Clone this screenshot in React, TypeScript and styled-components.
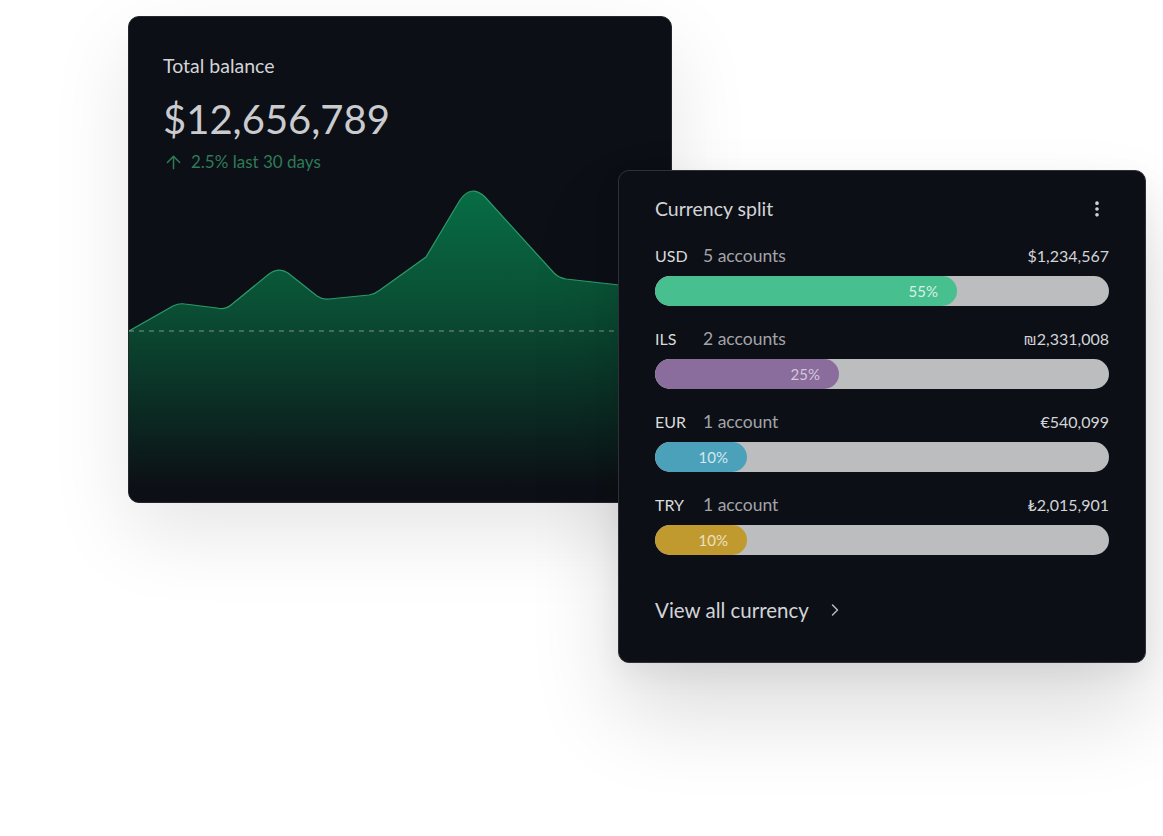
import React from 'react';
import styled, { createGlobalStyle } from 'styled-components';
import { ArrowUp, EllipsisVertical, ChevronRight } from 'lucide-react';

const GlobalStyle = createGlobalStyle`
  html, body {
    margin: 0;
    padding: 0;
    background: #ffffff;
  }
  body {
    font-family: Lato, 'Noto Sans', sans-serif;
  }
`;

const Page = styled.div`
  width: 1163px;
  height: 836px;
  padding: 16px 0 0 128px;
  box-sizing: border-box;
`;

const Stage = styled.div`
  position: relative;
  width: 1018px;
`;

const BalanceCard = styled.div`
  width: 544px;
  height: 487px;
  box-sizing: border-box;
  background: #0c0f16;
  border: 1px solid #23262d;
  border-radius: 11px;
  overflow: hidden;
  display: flex;
  flex-direction: column;
  box-shadow: 0 30px 80px rgba(0, 0, 0, 0.1);
`;

const BalanceHead = styled.div`
  padding: 37px 34px 0;
  display: flex;
  flex-direction: column;
`;

const CardTitle = styled.div`
  font-size: 19.5px;
  line-height: 24px;
  color: #d3d4d6;
`;

const BigAmount = styled.div`
  margin-top: 16px;
  font-size: 40px;
  line-height: 50px;
  color: #cacbce;
`;

const Trend = styled.div`
  margin-top: 7px;
  display: flex;
  align-items: center;
  gap: 7px;
  font-size: 17px;
  line-height: 22px;
  color: #2f7b56;
`;

const ChartBox = styled.div`
  flex: 1;
  margin-top: 8px;
  svg {
    display: block;
  }
`;

const SplitCard = styled.div`
  position: absolute;
  left: 490px;
  top: 154px;
  width: 528px;
  height: 493px;
  box-sizing: border-box;
  background: #0c0f16;
  border: 1px solid #2e3138;
  border-radius: 11px;
  padding: 25px 36px 0;
  display: flex;
  flex-direction: column;
  box-shadow: 0 50px 90px rgba(0, 0, 0, 0.14), 0 10px 30px rgba(0, 0, 0, 0.06);
`;

const SplitHeader = styled.div`
  display: flex;
  justify-content: space-between;
  align-items: center;
  height: 26px;
  color: #d3d4d6;
  svg {
    margin-right: 2px;
  }
`;

const Rows = styled.div`
  margin-top: 21px;
  display: flex;
  flex-direction: column;
  gap: 20px;
`;

const Row = styled.div`
  display: flex;
  flex-direction: column;
  gap: 9px;
`;

const RowTop = styled.div`
  display: flex;
  align-items: center;
  height: 24px;
  font-size: 16px;
`;

const Code = styled.span`
  width: 48px;
  color: #d9dadc;
`;

const Accounts = styled.span`
  flex: 1;
  font-size: 17.5px;
  color: #a3a4a8;
`;

const Amount = styled.span`
  color: #d3d4d6;
`;

const Track = styled.div`
  height: 30px;
  border-radius: 15px;
  background: #bcbdbf;
  overflow: hidden;
  display: flex;
`;

const Fill = styled.div<{ $color: string; $text: string }>`
  background: ${(p) => p.$color};
  border-radius: 15px;
  display: flex;
  align-items: center;
  justify-content: flex-end;
  padding-right: 19px;
  box-sizing: border-box;
  font-size: 15px;
  color: ${(p) => p.$text};
`;

const ViewAll = styled.div`
  margin-top: 43px;
  display: flex;
  align-items: center;
  gap: 16px;
  font-size: 20.5px;
  color: #d3d4d6;
  svg {
    color: #b8b9bc;
  }
`;

const rows = [
  { code: 'USD', accounts: '5 accounts', amount: '$1,234,567', pct: '55%', width: 302, color: '#48bf8f', text: '#d9f1e6' },
  { code: 'ILS', accounts: '2 accounts', amount: '₪2,331,008', pct: '25%', width: 184, color: '#8a6c9d', text: '#d4c8dc' },
  { code: 'EUR', accounts: '1 account', amount: '€540,099', pct: '10%', width: 92, color: '#4aa1b9', text: '#d6e8ee' },
  { code: 'TRY', accounts: '1 account', amount: '₺2,015,901', pct: '10%', width: 92, color: '#c09a2e', text: '#ece0c4' },
];

const areaPath =
  'M0,150 L44,125 Q50,122 56,123 L88,127 Q96,129 102,124 L140,93 Q150,86 159,92 L188,115 Q194,119 200,118 L240,114 Q246,113 251,109 L297,76 L331,19 Q342,3 356,16 L425,92 Q430,97 437,98 L544,110';

const Chart: React.FC = () => (
  <svg width="544" height="323" viewBox="0 0 544 323">
    <defs>
      <linearGradient id="area" x1="0" y1="10" x2="0" y2="305" gradientUnits="userSpaceOnUse">
        <stop offset="0" stopColor="#076d45" />
        <stop offset="0.4" stopColor="#0a4e34" />
        <stop offset="0.75" stopColor="#0b2a22" />
        <stop offset="1" stopColor="#0c1016" />
      </linearGradient>
    </defs>
    <path d={`${areaPath} L544,323 L0,323 Z`} fill="url(#area)" />
    <path d={areaPath} fill="none" stroke="#2c9a69" strokeWidth="1.2" />
    <line x1="0" y1="150" x2="544" y2="150" stroke="#a8adab" strokeOpacity="0.75" strokeWidth="1" strokeDasharray="5 5" />
  </svg>
);

const App: React.FC = () => (
  <Page>
    <GlobalStyle />
    <Stage>
      <BalanceCard>
        <BalanceHead>
          <CardTitle>Total balance</CardTitle>
          <BigAmount>$12,656,789</BigAmount>
          <Trend>
            <ArrowUp size={21} strokeWidth={1.7} />
            2.5% last 30 days
          </Trend>
        </BalanceHead>
        <ChartBox>
          <Chart />
        </ChartBox>
      </BalanceCard>
      <SplitCard>
        <SplitHeader>
          <CardTitle>Currency split</CardTitle>
          <EllipsisVertical size={20} strokeWidth={2.4} />
        </SplitHeader>
        <Rows>
          {rows.map((r) => (
            <Row key={r.code}>
              <RowTop>
                <Code>{r.code}</Code>
                <Accounts>{r.accounts}</Accounts>
                <Amount>{r.amount}</Amount>
              </RowTop>
              <Track>
                <Fill $color={r.color} $text={r.text} style={{ width: r.width }}>
                  {r.pct}
                </Fill>
              </Track>
            </Row>
          ))}
        </Rows>
        <ViewAll>
          View all currency
          <ChevronRight size={20} strokeWidth={1.8} />
        </ViewAll>
      </SplitCard>
    </Stage>
  </Page>
);

export default App;
